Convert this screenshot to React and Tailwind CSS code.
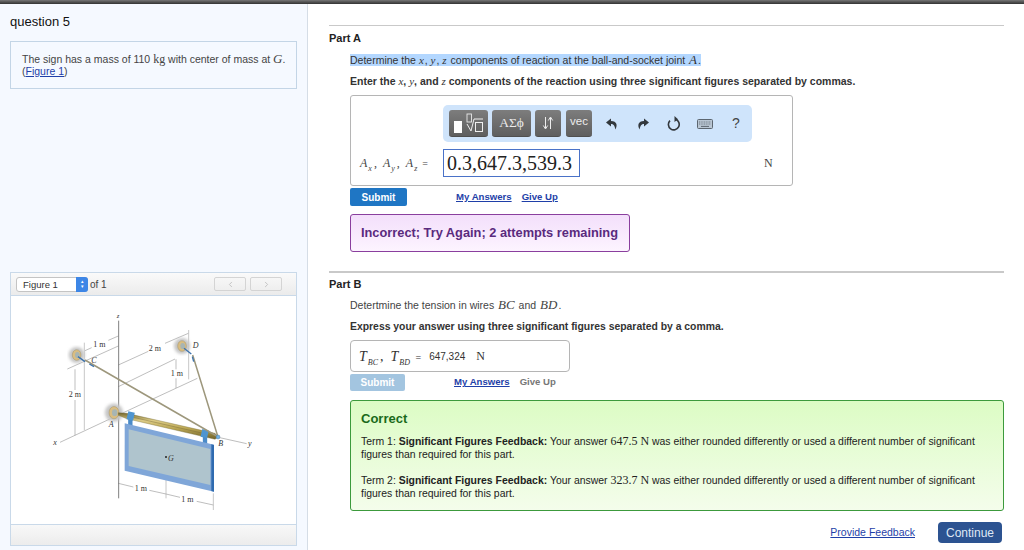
import { ChevronLeft, ChevronRight } from "lucide-react";

const serif = "font-['Liberation_Serif',serif]";

function M({ children, className = "" }) {
  return <span className={`${serif} italic ${className}`}>{children}</span>;
}

function Sub({ children }) {
  return <sub className="text-[8px] leading-none align-[-2px] italic ml-px mr-[2px]">{children}</sub>;
}

function TemplatesIcon() {
  return (
    <svg width="39" height="27" viewBox="0 0 39 27">
      <rect x="5" y="11" width="8" height="12" fill="#fff" />
      <rect x="18" y="4" width="4.5" height="8" fill="none" stroke="#e8e8e8" strokeWidth="0.9" />
      <path d="M18 14 L22 21 L25 9 L34 9" fill="none" stroke="#f0f0f0" strokeWidth="1" />
      <rect x="26.5" y="12.5" width="7" height="9" fill="none" stroke="#f0f0f0" strokeWidth="1" />
    </svg>
  );
}

function ArrowsIcon() {
  return (
    <svg width="12" height="14" viewBox="0 0 12 14">
      <path d="M3.5 1 V12 M1.3 9.5 L3.5 13 L5.7 9.5 M8.5 13 V2 M6.3 4.5 L8.5 1 L10.7 4.5" fill="none" stroke="#ececec" strokeWidth="1" />
    </svg>
  );
}

function ToolButton({ className, children }) {
  return (
    <div className={`h-[27px] flex items-center justify-center rounded-[3px] border-b border-[#4f4f4f] bg-gradient-to-b from-[#7d7d7d] to-[#5f5f5f] text-[#ececec] ${className}`}>
      {children}
    </div>
  );
}

function UndoIcon({ flip }) {
  return (
    <svg width="12" height="12" viewBox="0 0 12 12" className={flip ? "-scale-x-100" : ""}>
      <path d="M5 0.5 L0 4.5 L5 8.5 V6 C7.5 6 8.8 7.5 9.3 11.5 C11.8 7.5 11 3 5 3 Z" fill="#33383d" />
    </svg>
  );
}

function ResetIcon() {
  return (
    <svg width="14" height="15" viewBox="0 0 14 15">
      <path d="M8.5 3.3 A5.4 5.4 0 1 1 3 4.6" fill="none" stroke="#33383d" strokeWidth="1.6" />
      <path d="M7.5 0 L11 3.2 L7.5 6 Z" fill="#33383d" />
    </svg>
  );
}

function KeyboardIcon() {
  return (
    <svg width="16" height="10" viewBox="0 0 16 10">
      <rect x="0.5" y="0.5" width="15" height="9" rx="1" fill="#b9c6d3" stroke="#5c6670" />
      <path d="M2 3h12M2 5h12" stroke="#5c6670" strokeWidth="0.8" strokeDasharray="1 0.7" />
      <path d="M4 7.4h8" stroke="#5c6670" strokeWidth="1" />
    </svg>
  );
}

function Toolbar() {
  return (
    <div className="ml-[92px] w-[309px] h-[37px] rounded-[5px] bg-[#cfe4fb] flex items-center pl-[6px]">
      <ToolButton className="w-[39px]"><TemplatesIcon /></ToolButton>
      <ToolButton className={`w-[39px] ml-[4px] text-[13.5px] ${serif}`}>ΑΣϕ</ToolButton>
      <ToolButton className="w-[26px] ml-[4px]"><ArrowsIcon /></ToolButton>
      <ToolButton className="w-[26px] ml-[5px] text-[11.5px] pb-[2px]">vec</ToolButton>
      <div className="ml-[14px]"><UndoIcon /></div>
      <div className="ml-[19px]"><UndoIcon flip /></div>
      <div className="ml-[18px]"><ResetIcon /></div>
      <div className="ml-[16px]"><KeyboardIcon /></div>
      <span className="ml-[19px] text-[14px] text-[#444]">?</span>
    </div>
  );
}

function Figure() {
  const tan = "#9d977c";
  return (
    <svg width="210" height="210" viewBox="0 0 630 630">
      <defs>
        <filter id="soft"><feGaussianBlur stdDeviation="4" /></filter>
        <linearGradient id="rod" x1="0" y1="0" x2="0" y2="1">
          <stop offset="0" stopColor="#6f6229" />
          <stop offset="0.3" stopColor="#dccb85" />
          <stop offset="0.6" stopColor="#b9a552" />
          <stop offset="1" stopColor="#6e6029" />
        </linearGradient>
      </defs>
      {/* axes and dimension lines */}
      <g stroke="#666" strokeWidth="1.3" fill="none">
        <path d="M30 397 L205 315 M205 315 L442 205" />
        <path d="M505 382 L590 401" />
        <path d="M52 177 L205 108 M205 230 L375 147" />
        <path d="M105 122 L125 113 M175 91 L205 78 M205 165 L295 124 M345 100 L415 70" />
        <path d="M75 178 L75 240 M75 270 L75 376 M378 148 L378 178 M378 205 L378 234" />
        <path d="M205 520 L250 531 M298 541 L348 552 M348 552 L390 562 M440 574 L490 585" />
      </g>
      <g stroke="#aaa" strokeWidth="2" fill="none">
        <path d="M103 98 L103 360 M416 60 L416 208 M348 445 L348 565 M490 550 L490 600" />
      </g>
      <path d="M206 32 L206 565" stroke="#666" strokeWidth="2.5" />
      {/* wall plates */}
      {[[80, 135, 1], [396, 108, 1], [192, 308, 1.15]].map(([x, y, s]) => (
        <g key={x}>
          <circle cx={x} cy={y} r={24 * s} fill="#c6c6c6" filter="url(#soft)" />
          <ellipse cx={x} cy={y} rx={13 * s} ry={16 * s} fill="#d9bd82" stroke="#8d7b4c" />
          <ellipse cx={x + 2} cy={y} rx={7 * s} ry={9 * s} fill="#a7b5b3" />
        </g>
      ))}
      {/* sign */}
      <path d="M241 325 L241 352 M465 378 L465 408" stroke="#4b8bc9" strokeWidth="13" />
      <polygon points="224,340 492,404 492,545 224,482" fill="#7fa6d8" />
      <polygon points="236,358 481,417 481,525 236,468" fill="#afc4cd" />
      <polygon points="484,403 492,405 492,545 484,543" fill="#2f6bb0" />
      {/* rod */}
      <polygon points="205,308 230,310 495,370 505,380 495,388 230,326 205,316" fill="url(#rod)" stroke="#6e6334" strokeWidth="1" />
      <path d="M250 322 L455 369" stroke="#6e6334" strokeWidth="1.2" />
      <rect x="232" y="306" width="20" height="24" fill="#4f95d0" transform="rotate(13 242 318)" />
      <rect x="454" y="359" width="20" height="24" fill="#4f95d0" transform="rotate(13 464 371)" />
      {/* cables */}
      <path d="M105 150 L500 378 M428 135 L503 378" stroke={tan} strokeWidth="4.5" />
      <path d="M84 140 L105 155 M118 162 L132 170 M402 115 L424 132 M427 140 L431 155" stroke="#3d73ad" strokeWidth="4" />
      <circle cx="504" cy="381" r="6" fill="#6fb0e3" stroke="#2d5f8f" />
      {/* labels */}
      <g fontFamily="'Liberation Serif', serif" fontSize="24" fill="#333">
        <text x="200" y="24" fontStyle="italic" fontSize="20">z</text>
        <text x="10" y="404" fontStyle="italic">x</text>
        <text x="124" y="160" fontStyle="italic">C</text>
        <text x="428" y="114" fontStyle="italic">D</text>
        <text x="176" y="352" fontStyle="italic">A</text>
        <text x="505" y="407" fontStyle="italic">B</text>
        <text x="354" y="453" fontStyle="italic">G</text>
        <text x="594" y="408" fontStyle="italic">y</text>
        <text x="130" y="110">1 m</text>
        <text x="296" y="124">2 m</text>
        <text x="56" y="262">2 m</text>
        <text x="362" y="198">1 m</text>
        <text x="254" y="544">1 m</text>
        <text x="394" y="577">1 m</text>
      </g>
      <circle cx="348" cy="441" r="3" fill="#222" />
    </svg>
  );
}

function LeftPane() {
  return (
    <div className="w-[308px] shrink-0 h-[546px] bg-[#f5f9ff] border-r border-[#d5dde6] pl-[10px] pr-[10px] flex flex-col">
      <h1 className="text-[13px] leading-[15px] text-[#111] mt-[10px]">question 5</h1>
      <div className="mt-[12px] h-[48px] w-[287px] border border-[#c3d5e6] pl-[11px] pt-[10px] text-[10.5px] leading-[13px] text-[#444]">
        <div className="whitespace-nowrap">
          The sign has a mass of 110 <span className={`${serif} text-[12px]`}>kg</span> with center of mass at <M className="text-[13px]">G</M>.
        </div>
        <div className="-mt-px">(<span className="text-[#1f3fa8] underline">Figure 1</span>)</div>
      </div>
      <div className="mt-[183px] w-[287px] h-[274px] border border-[#c9d9e9] bg-white flex flex-col">
        <div className="h-[23px] shrink-0 border-b border-[#c9d9e9] bg-gradient-to-b from-[#fafafa] to-[#ebebeb] flex items-center px-[5px]">
          <div className="w-[72px] h-[15px] bg-white border border-[#c4c4c4] rounded-[3px] relative text-[9.5px] leading-[13px] pl-[6px] text-[#333]">
            Figure 1
            <div className="absolute -right-px -top-px w-[12px] h-[15px] rounded-r-[3px] bg-[#3d86e6] flex flex-col items-center justify-center text-white text-[5px] leading-[5px]">
              <span>▴</span><span>▾</span>
            </div>
          </div>
          <span className="ml-[2px] text-[10px] text-[#444]">of 1</span>
          <div className="ml-auto flex gap-[4px] mr-[9px]">
            <div className="w-[32px] h-[14px] border border-[#d4d4d4] rounded-[2px] flex items-center justify-center text-[#b5b5b5]"><ChevronLeft size={9} /></div>
            <div className="w-[32px] h-[14px] border border-[#d4d4d4] rounded-[2px] flex items-center justify-center text-[#b5b5b5]"><ChevronRight size={9} /></div>
          </div>
        </div>
        <div className="flex-1 pl-[39px] pt-[14px]"><Figure /></div>
        <div className="h-[21px] shrink-0 border-t border-[#c9d9e9] bg-gradient-to-b from-[#f8f8f8] to-[#ececec]" />
      </div>
    </div>
  );
}

function PartA() {
  return (
    <section>
      <div className="h-px bg-[#c9c9c9]" />
      <h2 className="mt-[6px] text-[11px] leading-[13px] font-bold text-[#222]">Part A</h2>
      <div className="ml-[21px]">
        <p className="mt-[8px] text-[10.5px] leading-[13px] text-[#333]">
          <span className="bg-[#b3d7ff]">
            Determine the <M className="text-[11px] mr-[1px]">x</M>, <M className="text-[11px] mr-[1px]">y</M>, <M className="text-[11px] mr-[1px]">z</M> components of reaction at the ball-and-socket joint <M className="text-[13px] mx-[1px]">A</M>.
          </span>
        </p>
        <p className="mt-[8px] text-[10.5px] leading-[13px] font-bold text-[#333]">
          Enter the <M className="font-normal text-[11px]">x</M>, <M className="font-normal text-[11px]">y</M>, and <M className="font-normal text-[11px]">z</M> components of the reaction using three significant figures separated by commas.
        </p>
        <div className="mt-[7px] w-[443px] h-[91px] border border-[#b5b5b5] rounded-[3px] pt-[9px]">
          <Toolbar />
          <div className="flex items-center mt-[7px]">
            <span className={`ml-[9px] w-[83px] text-[12px] text-[#444] ${serif} whitespace-nowrap`}>
              <i>A<Sub>x</Sub></i>,<i className="ml-[6px]">A<Sub>y</Sub></i>,<i className="ml-[6px]">A<Sub>z</Sub></i> <span className="text-[10px]">=</span>
            </span>
            <div className={`w-[137px] h-[28px] border border-[#4a72c8] pl-[3px] text-[20px] leading-[26px] text-[#222] ${serif}`}>0.3,647.3,539.3</div>
            <span className={`ml-[184px] text-[12px] text-[#444] ${serif}`}>N</span>
          </div>
        </div>
        <div className="mt-[2px] flex items-center h-[18px]">
          <div className="w-[57px] h-[18px] rounded-[2px] bg-[#1f76c4] text-white text-[10px] font-bold flex items-center justify-center">Submit</div>
          <span className="ml-[49px] text-[9.6px] font-bold text-[#1f3fa8] underline">My Answers</span>
          <span className="ml-[10px] text-[9.6px] font-bold text-[#1f3fa8] underline">Give Up</span>
        </div>
        <div className="mt-[8px] w-[280px] h-[38px] rounded-[3px] border border-[#8a3f9e] bg-gradient-to-b from-[#f3dffb] to-[#fdf4ff] flex items-center pl-[10px] text-[12.8px] font-bold text-[#5a2a7e]">
          Incorrect; Try Again; 2 attempts remaining
        </div>
      </div>
    </section>
  );
}

function FeedbackTerm({ term, value, className }) {
  return (
    <p className={`text-[10.45px] leading-[13px] text-[#222] ${className}`}>
      Term {term}: <b>Significant Figures Feedback:</b> Your answer <span className={`${serif} text-[12px]`}>{value} N</span> was either rounded differently or used a different number of significant figures than required for this part.
    </p>
  );
}

function PartB() {
  return (
    <section className="mt-[19px]">
      <div className="h-[2px] bg-[#c9c9c9]" />
      <h2 className="mt-[5px] text-[11px] leading-[13px] font-bold text-[#222]">Part B</h2>
      <div className="ml-[21px]">
        <p className="mt-[7px] text-[10.5px] leading-[14px] text-[#444]">
          Detertmine the tension in wires <M className="text-[13px] mx-[1px]">BC</M> and <M className="text-[13px] mx-[1px]">BD</M>.
        </p>
        <p className="mt-[8px] text-[10.4px] leading-[13px] font-bold text-[#333]">
          Express your answer using three significant figures separated by a comma.
        </p>
        <div className="mt-[7px] w-[220px] h-[32px] border border-[#b5b5b5] rounded-[4px] flex items-center pl-[8px] text-[#333]">
          <span className={`${serif} text-[14px] whitespace-nowrap`}>
            <i>T<Sub>BC</Sub></i>,<i className="ml-[7px]">T<Sub>BD</Sub></i> <span className="text-[10px]">=</span>
          </span>
          <span className="ml-[8px] text-[10px]">647,324</span>
          <span className={`ml-[11px] text-[12px] ${serif}`}>N</span>
        </div>
        <div className="mt-[2px] flex items-center h-[17px]">
          <div className="w-[55px] h-[17px] rounded-[2px] bg-[#a3c5e0] text-white text-[10px] font-bold flex items-center justify-center">Submit</div>
          <span className="ml-[49px] text-[9.6px] font-bold text-[#1f3fa8] underline">My Answers</span>
          <span className="ml-[10px] text-[9.6px] font-bold text-[#777]">Give Up</span>
        </div>
        <div className="mt-[9px] h-[111px] rounded-[3px] border border-[#3c9a3c] bg-gradient-to-b from-[#dcfcc4] to-[#f4fdeb] pl-[10px] pr-[26px] pt-[10px]">
          <h3 className="text-[13px] leading-[15px] font-bold text-[#1a6a1a]">Correct</h3>
          <FeedbackTerm term={1} value="647.5" className="mt-[9px]" />
          <FeedbackTerm term={2} value="323.7" className="mt-[13px]" />
        </div>
      </div>
    </section>
  );
}

export default function App() {
  return (
    <div className="w-[1024px] h-[550px] overflow-hidden bg-white font-['Liberation_Sans',sans-serif]">
      <div className="h-[4px] bg-gradient-to-b from-[#777] to-[#333]" />
      <div className="flex">
        <LeftPane />
        <main className="flex-1 pl-[21px] pr-[20px] pt-[21px]">
          <PartA />
          <PartB />
          <div className="mt-[11px] flex items-center justify-end pr-[2px]">
            <span className="text-[10.5px] text-[#1f3fa8] underline">Provide Feedback</span>
            <div className="ml-[23px] w-[64px] h-[21px] rounded-[4px] bg-[#2c5391] text-[#dfe8f5] text-[12px] flex items-center justify-center">Continue</div>
          </div>
        </main>
      </div>
    </div>
  );
}
